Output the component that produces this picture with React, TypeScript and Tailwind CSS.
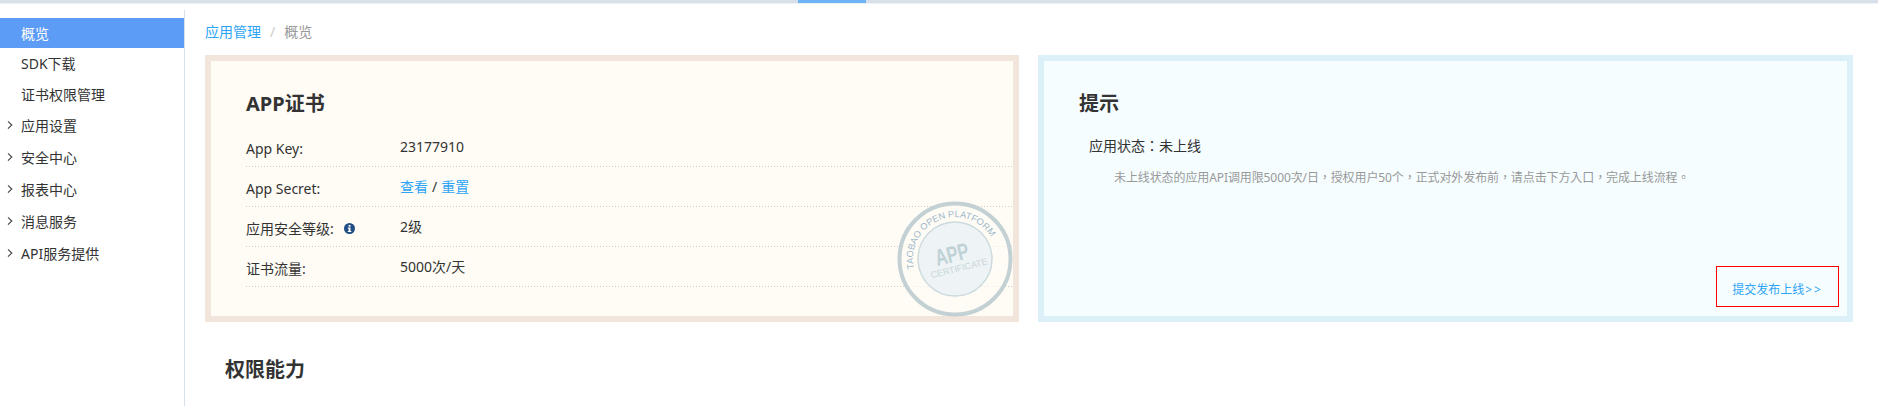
import type { ReactNode } from "react";

const menu = [
  { label: "SDK下载", arrow: false, h: "h-[31px]" },
  { label: "证书权限管理", arrow: false, h: "h-[30px]" },
  { label: "应用设置", arrow: true, h: "h-[32px]" },
  { label: "安全中心", arrow: true, h: "h-[32px]" },
  { label: "报表中心", arrow: true, h: "h-[32px]" },
  { label: "消息服务", arrow: true, h: "h-[32px]" },
  { label: "API服务提供", arrow: true, h: "h-[32px]" },
];

function Chevron() {
  return (
    <svg className="absolute left-[7px] top-1/2 h-[9px] w-[6px] -translate-y-1/2" viewBox="0 0 6 9" fill="none" stroke="#444" strokeWidth="1.1">
      <path d="M1 .8 4.8 4.5 1 8.2" />
    </svg>
  );
}

function Sidebar() {
  return (
    <aside className="mt-[7px] w-[185px] shrink-0 border-r border-[#d8e0ea] pt-[8px] text-[14px] text-[#333]">
      <div className="flex h-[30px] items-center bg-[#5c9cf6] pl-[21px] text-white">概览</div>
      {menu.map((item) => (
        <div key={item.label} className={`relative flex items-center pl-[21px] ${item.h}`}>
          {item.arrow && <Chevron />}
          {item.label}
        </div>
      ))}
    </aside>
  );
}

function Row({ label, info, children }: { label: string; info?: boolean; children: ReactNode }) {
  return (
    <div className="flex h-[40px] bg-[linear-gradient(90deg,#cdcdc8_1px,transparent_1px)] bg-[length:3px_1px] bg-bottom-left bg-repeat-x pb-[1px]">
      <div className="flex w-[154px] shrink-0 items-center gap-[10px] pt-[4px]">
        {label}
        {info && (
          <svg className="h-[11px] w-[11px]" viewBox="0 0 11 11">
            <circle cx="5.5" cy="5.5" r="5.5" fill="#1f4e85" />
            <rect x="4.6" y="2" width="1.9" height="1.7" fill="#fff" />
            <path d="M3.8 4.6h2.7v3.3h.8v1H3.8v-1h.8V5.6h-.8z" fill="#fff" />
          </svg>
        )}
      </div>
      <div className="flex items-center">{children}</div>
    </div>
  );
}

function Stamp() {
  return (
    <svg className="absolute right-0 top-[140px] h-[116px] w-[116px]" viewBox="0 0 116 116">
      <defs>
        <path id="stamp-arc" d="M17.1 67.7 A42 42 0 1 1 100 58" />
      </defs>
      <circle cx="58" cy="58" r="55.5" fill="#fffcf6" fillOpacity="0.7" stroke="#c3d0d4" strokeWidth="4" />
      <circle cx="58" cy="58" r="37" fill="#eef3f5" stroke="#cddbde" strokeWidth="1.5" />
      <text fontFamily='"Liberation Sans", sans-serif' fontSize="9.2" fill="#9db8cb">
        <textPath href="#stamp-arc">TAOBAO OPEN PLATFORM</textPath>
      </text>
      <g transform="rotate(-14 58 58)">
        <text x="56" y="60.5" textAnchor="middle" fontFamily='"Liberation Sans", sans-serif' fontWeight="700" fontSize="23" fill="#bfd2d6" textLength="34" lengthAdjust="spacingAndGlyphs">APP</text>
        <text x="59.7" y="71" textAnchor="middle" fontFamily='"Liberation Sans", sans-serif' fontSize="9" fill="#c7d6dc">CERTIFICATE</text>
      </g>
    </svg>
  );
}

function CertCard() {
  return (
    <section className="relative h-[267px] w-[814px] border-[6px] border-[#f2e5db] bg-[#fffcf6] pl-[35px] pt-[23px]">
      <h2 className="h-[40px] text-[20px] leading-[40px] font-bold text-[#333]">APP证书</h2>
      <div className="mt-[3px] text-[14px] text-[#333]">
        <Row label="App Key:">23177910</Row>
        <Row label="App Secret:">
          <a className="text-[#2ea4f5]">查看</a>
          <span className="mx-[4px]">/</span>
          <a className="text-[#2ea4f5]">重置</a>
        </Row>
        <Row label="应用安全等级:" info>2级</Row>
        <Row label="证书流量:">5000次/天</Row>
      </div>
      <Stamp />
    </section>
  );
}

function TipCard() {
  return (
    <section className="flex h-[267px] w-[815px] flex-col border-[6px] border-[#dbf0f9] bg-[#f5fdff] pl-[35px] pr-[8px] pt-[23px] font-['Noto_Sans','Noto_Sans_CJK_TC',sans-serif]">
      <h2 className="h-[40px] text-[20px] leading-[40px] font-bold text-[#333]">提示</h2>
      <p className="mt-[12px] pl-[10px] text-[14px] leading-[20px] text-[#333]">应用状态：未上线</p>
      <p className="mt-[12px] pl-[35px] text-[12px] leading-[20px] tracking-[-0.1px] text-[#999]">
        未上线状态的应用API调用限5000次/日，授权用户50个，正式对外发布前，请点击下方入口，完成上线流程。
      </p>
      <div className="mt-auto mb-[9px] flex justify-end">
        <a className="flex h-[41px] w-[123px] items-center justify-center border border-[#ff0000] pt-[7px] text-[12px] text-[#2ea4f5]">
          提交发布上线<span className="ml-[1px] tracking-[2px]">&gt;&gt;</span>
        </a>
      </div>
    </section>
  );
}

export default function App() {
  return (
    <div className="h-[406px] w-[1878px] overflow-hidden bg-white font-['Noto_Sans','Noto_Sans_CJK_SC',sans-serif]">
      <div className="h-[3px] bg-[#d8e0ea] pl-[798px] shadow-[0_1px_1px_#eef1f5]">
        <div className="h-[3px] w-[68px] bg-[#6cb3f5]" />
      </div>
      <div className="flex h-[403px]">
        <Sidebar />
        <main className="min-w-0 flex-1 pl-[20px]">
          <div className="flex h-[52px] items-center pt-[4px] text-[14px] text-[#999]">
            <a className="text-[#2ea4f5]">应用管理</a>
            <span className="mx-[9px] text-[#ccc]">/</span>
            概览
          </div>
          <div className="flex gap-[19px]">
            <CertCard />
            <TipCard />
          </div>
          <h2 className="mt-[33px] pl-[20px] text-[20px] leading-[30px] font-bold text-[#333]">权限能力</h2>
        </main>
      </div>
    </div>
  );
}
